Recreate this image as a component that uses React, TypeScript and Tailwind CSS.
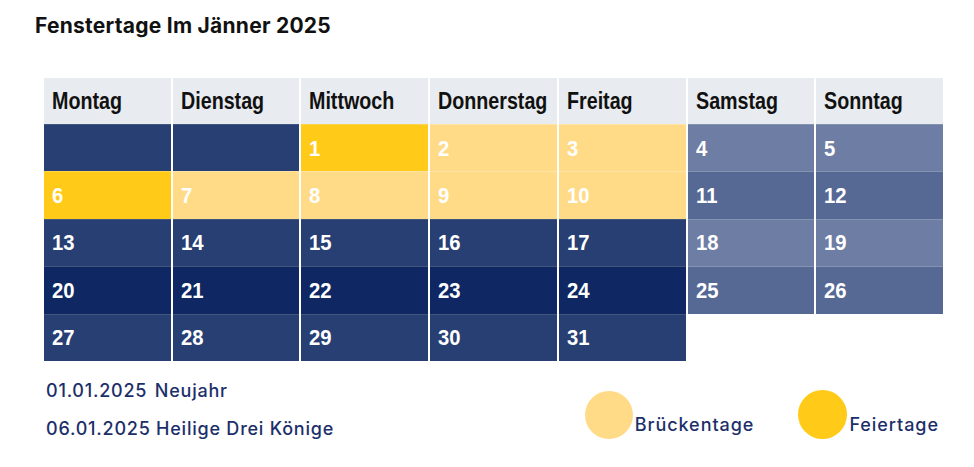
const headers = ['Montag', 'Dienstag', 'Mittwoch', 'Donnerstag', 'Freitag', 'Samstag', 'Sonntag']

type Kind = 'base' | 'dark' | 'holiday' | 'bridge' | 'weLight' | 'weDark' | 'none'

interface Cell {
  day?: number
  kind: Kind
}

const rows: Cell[][] = [
  [{ kind: 'base' }, { kind: 'base' }, { day: 1, kind: 'holiday' }, { day: 2, kind: 'bridge' }, { day: 3, kind: 'bridge' }, { day: 4, kind: 'weLight' }, { day: 5, kind: 'weLight' }],
  [{ day: 6, kind: 'holiday' }, { day: 7, kind: 'bridge' }, { day: 8, kind: 'bridge' }, { day: 9, kind: 'bridge' }, { day: 10, kind: 'bridge' }, { day: 11, kind: 'weDark' }, { day: 12, kind: 'weDark' }],
  [{ day: 13, kind: 'base' }, { day: 14, kind: 'base' }, { day: 15, kind: 'base' }, { day: 16, kind: 'base' }, { day: 17, kind: 'base' }, { day: 18, kind: 'weLight' }, { day: 19, kind: 'weLight' }],
  [{ day: 20, kind: 'dark' }, { day: 21, kind: 'dark' }, { day: 22, kind: 'dark' }, { day: 23, kind: 'dark' }, { day: 24, kind: 'dark' }, { day: 25, kind: 'weDark' }, { day: 26, kind: 'weDark' }],
  [{ day: 27, kind: 'base' }, { day: 28, kind: 'base' }, { day: 29, kind: 'base' }, { day: 30, kind: 'base' }, { day: 31, kind: 'base' }, { kind: 'none' }, { kind: 'none' }],
]

const kindClass: Record<Kind, string> = {
  base: 'bg-[#283f73] border-t border-[#42557f]',
  dark: 'bg-[#0f2864] border-t border-[#42557f]',
  holiday: 'bg-[#ffca18] border-t border-[#ffd54a]',
  bridge: 'bg-[#ffdb88] border-t border-[#ffe4a6]',
  weLight: 'bg-[#6e7da3] border-t border-[#8593b3]',
  weDark: 'bg-[#566995] border-t border-[#8593b3]',
  none: 'bg-white',
}

const narrow = { fontFamily: '"Liberation Sans", Arial, sans-serif' }

export default function App() {
  return (
    <div className="w-[974px] h-[467px] bg-white overflow-hidden" style={{ fontFamily: 'Inter, "Liberation Sans", sans-serif' }}>
      <h1 className="pl-[35px] pt-[12px] text-[21px] font-bold tracking-[0.25px] text-[#111111] leading-[28px]">
        Fenstertage Im Jänner 2025
      </h1>

      <div className="ml-[44px] mt-[38px] w-[899px]" style={narrow}>
        <div className="grid grid-cols-7 gap-x-[2px]">
          {headers.map(h => (
            <div key={h} className="h-[46px] bg-[#e8ebef] flex items-center pl-[8px] text-[#111111] overflow-hidden">
              <span className="inline-block text-[24px] font-bold scale-x-[0.82] origin-left whitespace-nowrap">{h}</span>
            </div>
          ))}
        </div>
        {rows.map((row, i) => (
          <div key={i} className="grid grid-cols-7 gap-x-[2px]">
            {row.map((c, j) => (
              <div
                key={j}
                className={`h-[47.4px] flex items-center pl-[8px] text-white ${kindClass[c.kind]}`}
              >
                <span className="inline-block text-[22px] font-bold scale-x-[0.92] origin-left">{c.day ?? ''}</span>
              </div>
            ))}
          </div>
        ))}
      </div>

      <div className="flex items-end justify-between pl-[46px] pr-[35px] mt-[19px]">
        <div className="text-[18px] font-medium tracking-[0.77px] text-[#1c2f6a] leading-[22px] flex flex-col gap-[16px]">
          <div>01.01.2025 <span className="ml-[2px]">Neujahr</span></div>
          <div>06.01.2025 Heilige Drei Könige</div>
        </div>
        <div className="flex items-end gap-[44px] pb-[1px]">
          <div className="flex items-end">
            <span className="w-[48px] h-[48px] rounded-full bg-[#ffdb88]" />
            <span className="text-[18px] font-medium tracking-[0.95px] text-[#1c2f6a] leading-[22px] ml-[2px] mb-[3px]">Brückentage</span>
          </div>
          <div className="flex items-end">
            <span className="w-[49px] h-[49px] rounded-full bg-[#ffca18]" />
            <span className="text-[18px] font-medium tracking-[0.95px] text-[#1c2f6a] leading-[22px] ml-[2px] mb-[3px]">Feiertage</span>
          </div>
        </div>
      </div>
    </div>
  )
}
